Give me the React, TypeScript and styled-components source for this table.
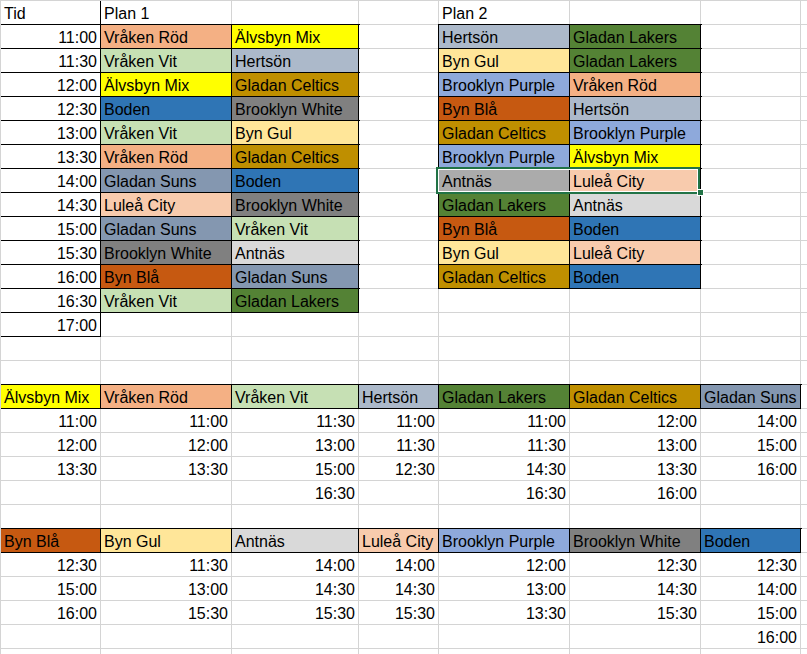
import React from 'react';
import styled, { createGlobalStyle } from 'styled-components';

const Global = createGlobalStyle`
  html, body { margin: 0; padding: 0; background: #ffffff; }
  body { font-family: "Liberation Sans", Arial, sans-serif; }
`;

const GRID = '#d4d4d4';

const COLORS: Record<string, string> = {
  'Vråken Röd': '#F4B084',
  'Vråken Vit': '#C6E0B4',
  'Älvsbyn Mix': '#FFFF00',
  'Hertsön': '#ACB9CA',
  'Gladan Celtics': '#BF8F00',
  'Boden': '#2F75B5',
  'Brooklyn White': '#808080',
  'Byn Gul': '#FFE699',
  'Gladan Suns': '#8497B0',
  'Luleå City': '#F8CBAD',
  'Antnäs': '#D9D9D9',
  'Byn Blå': '#C65911',
  'Gladan Lakers': '#548235',
  'Brooklyn Purple': '#8EA9DB',
};

type CellData = { t?: string; bg?: string; r?: boolean; b?: boolean; dr?: boolean };

const Sheet = styled.div`
  position: relative;
  width: 807px;
  height: 654px;
  overflow: hidden;
  box-sizing: border-box;
  border-top: 1px solid ${GRID};
  border-left: 1px solid ${GRID};
  background: #ffffff;
`;

const Row = styled.div`
  display: grid;
  grid-template-columns: 100px 131px 127px 80px 131px 131px 100px 1fr;
  height: 24px;
`;

const Cell = styled.div<{ $bg?: string; $right?: boolean; $boxed?: boolean; $darkRight?: boolean }>`
  box-sizing: border-box;
  height: 24px;
  padding: 1px 3px 0 3px;
  line-height: 23px;
  font-size: 16px;
  color: #000;
  white-space: nowrap;
  overflow: hidden;
  text-align: ${(p) => (p.$right ? 'right' : 'left')};
  background: ${(p) => p.$bg || '#ffffff'};
  border-right: 1px solid ${(p) => (p.$boxed || p.$darkRight ? '#000' : GRID)};
  border-bottom: 1px solid ${(p) => (p.$boxed ? '#000' : GRID)};
  box-shadow: ${(p) => (p.$boxed ? '0 0 0 1px #000' : 'none')};
`;

const Selection = styled.div`
  position: absolute;
  left: 435px;
  top: 166px;
  width: 264px;
  height: 27px;
  box-sizing: border-box;
  border: 2px solid #217346;
  box-shadow: inset 0 0 0 1px #ffffff;
  pointer-events: none;
`;

const Handle = styled.div`
  position: absolute;
  left: 696px;
  top: 188px;
  width: 7px;
  height: 7px;
  box-sizing: border-box;
  background: #217346;
  border: 1px solid #ffffff;
`;

const E: CellData = {};
const tm = (t: string): CellData => ({ t, r: true });
const box = (t: string): CellData => ({ t, r: true, b: true });
const team = (t: string): CellData => ({ t, bg: COLORS[t], b: true });

const plan1: [string, string, string][] = [
  ['11:00', 'Vråken Röd', 'Älvsbyn Mix'],
  ['11:30', 'Vråken Vit', 'Hertsön'],
  ['12:00', 'Älvsbyn Mix', 'Gladan Celtics'],
  ['12:30', 'Boden', 'Brooklyn White'],
  ['13:00', 'Vråken Vit', 'Byn Gul'],
  ['13:30', 'Vråken Röd', 'Gladan Celtics'],
  ['14:00', 'Gladan Suns', 'Boden'],
  ['14:30', 'Luleå City', 'Brooklyn White'],
  ['15:00', 'Gladan Suns', 'Vråken Vit'],
  ['15:30', 'Brooklyn White', 'Antnäs'],
  ['16:00', 'Byn Blå', 'Gladan Suns'],
  ['16:30', 'Vråken Vit', 'Gladan Lakers'],
];

const plan2: [string, string][] = [
  ['Hertsön', 'Gladan Lakers'],
  ['Byn Gul', 'Gladan Lakers'],
  ['Brooklyn Purple', 'Vråken Röd'],
  ['Byn Blå', 'Hertsön'],
  ['Gladan Celtics', 'Brooklyn Purple'],
  ['Brooklyn Purple', 'Älvsbyn Mix'],
  ['Antnäs', 'Luleå City'],
  ['Gladan Lakers', 'Antnäs'],
  ['Byn Blå', 'Boden'],
  ['Byn Gul', 'Luleå City'],
  ['Gladan Celtics', 'Boden'],
];

const heads1 = ['Älvsbyn Mix', 'Vråken Röd', 'Vråken Vit', 'Hertsön', 'Gladan Lakers', 'Gladan Celtics', 'Gladan Suns'];
const times1 = [
  ['11:00', '12:00', '13:30', ''],
  ['11:00', '12:00', '13:30', ''],
  ['11:30', '13:00', '15:00', '16:30'],
  ['11:00', '11:30', '12:30', ''],
  ['11:00', '11:30', '14:30', '16:30'],
  ['12:00', '13:00', '13:30', '16:00'],
  ['14:00', '15:00', '16:00', ''],
];
const heads2 = ['Byn Blå', 'Byn Gul', 'Antnäs', 'Luleå City', 'Brooklyn Purple', 'Brooklyn White', 'Boden'];
const times2 = [
  ['12:30', '15:00', '16:00', ''],
  ['11:30', '13:00', '15:30', ''],
  ['14:00', '14:30', '15:30', ''],
  ['14:00', '14:30', '15:30', ''],
  ['12:00', '13:00', '13:30', ''],
  ['12:30', '14:30', '15:30', ''],
  ['12:30', '14:00', '15:00', '16:00'],
];

function buildRows(): CellData[][] {
  const rows: CellData[][] = [];
  rows.push([{ t: 'Tid', dr: true }, { t: 'Plan 1' }, E, E, { t: 'Plan 2' }, E, E, E]);
  for (let i = 0; i < 13; i++) {
    const p1 = plan1[i];
    const p2 = plan2[i];
    const row: CellData[] = [];
    if (p1) {
      row.push(box(p1[0]), team(p1[1]), team(p1[2]));
    } else {
      row.push(box('17:00'), E, E);
    }
    row.push(E);
    if (p2) {
      const left = team(p2[0]);
      if (i === 6) left.bg = '#ABABAB';
      row.push(left, team(p2[1]));
    } else {
      row.push(E, E);
    }
    row.push(E, E);
    rows.push(row);
  }
  rows.push([E, E, E, E, E, E, E, E]);
  rows.push([E, E, E, E, E, E, E, E]);
  rows.push([...heads1.map(team), E]);
  for (let k = 0; k < 4; k++) rows.push([...times1.map((c) => (c[k] ? tm(c[k]) : E)), E]);
  rows.push([E, E, E, E, E, E, E, E]);
  rows.push([...heads2.map(team), E]);
  for (let k = 0; k < 4; k++) rows.push([...times2.map((c) => (c[k] ? tm(c[k]) : E)), E]);
  rows.push([E, E, E, E, E, E, E, E]);
  return rows;
}

export default function App() {
  const rows = buildRows();
  return (
    <>
      <Global />
      <Sheet>
        {rows.map((row, ri) => (
          <Row key={ri}>
            {row.map((c, ci) => (
              <Cell key={ci} $bg={c.bg} $right={c.r} $boxed={c.b} $darkRight={c.dr}>
                {c.t}
              </Cell>
            ))}
          </Row>
        ))}
        <Selection />
        <Handle />
      </Sheet>
    </>
  );
}
